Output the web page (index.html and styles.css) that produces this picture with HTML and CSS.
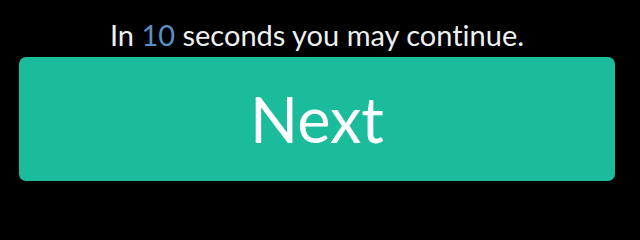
FILE: index.html
```html
<!DOCTYPE html>
<html>
<head>
<meta charset="utf-8">
<link rel="stylesheet" href="styles.css">
</head>
<body>
<div class="wrap">
  <p class="notice">In <span class="count">10</span> seconds you may continue.</p>
  <button class="next">Next</button>
</div>
</body>
</html>
```
FILE: styles.css
```css
html, body {
  margin: 0;
  padding: 0;
  background: #000;
}
.wrap {
  width: 596px;
  margin-left: 19px;
  padding-top: 17px;
  display: flex;
  flex-direction: column;
  align-items: stretch;
  font-family: Lato, "Open Sans", sans-serif;
  font-variant-ligatures: none;
}
.notice {
  margin: 0;
  height: 40px;
  text-align: center;
  color: #ecf0f1;
  font-size: 29px;
  line-height: 35px;
}
.count {
  color: #5a8fc4;
}
.next {
  height: 124px;
  border: none;
  border-radius: 7px;
  background: #1abc9c;
  color: #fff;
  font-family: Lato, sans-serif;
  font-variant-ligatures: none;
  font-size: 63px;
  padding: 0;
  line-height: 124px;
}
```
